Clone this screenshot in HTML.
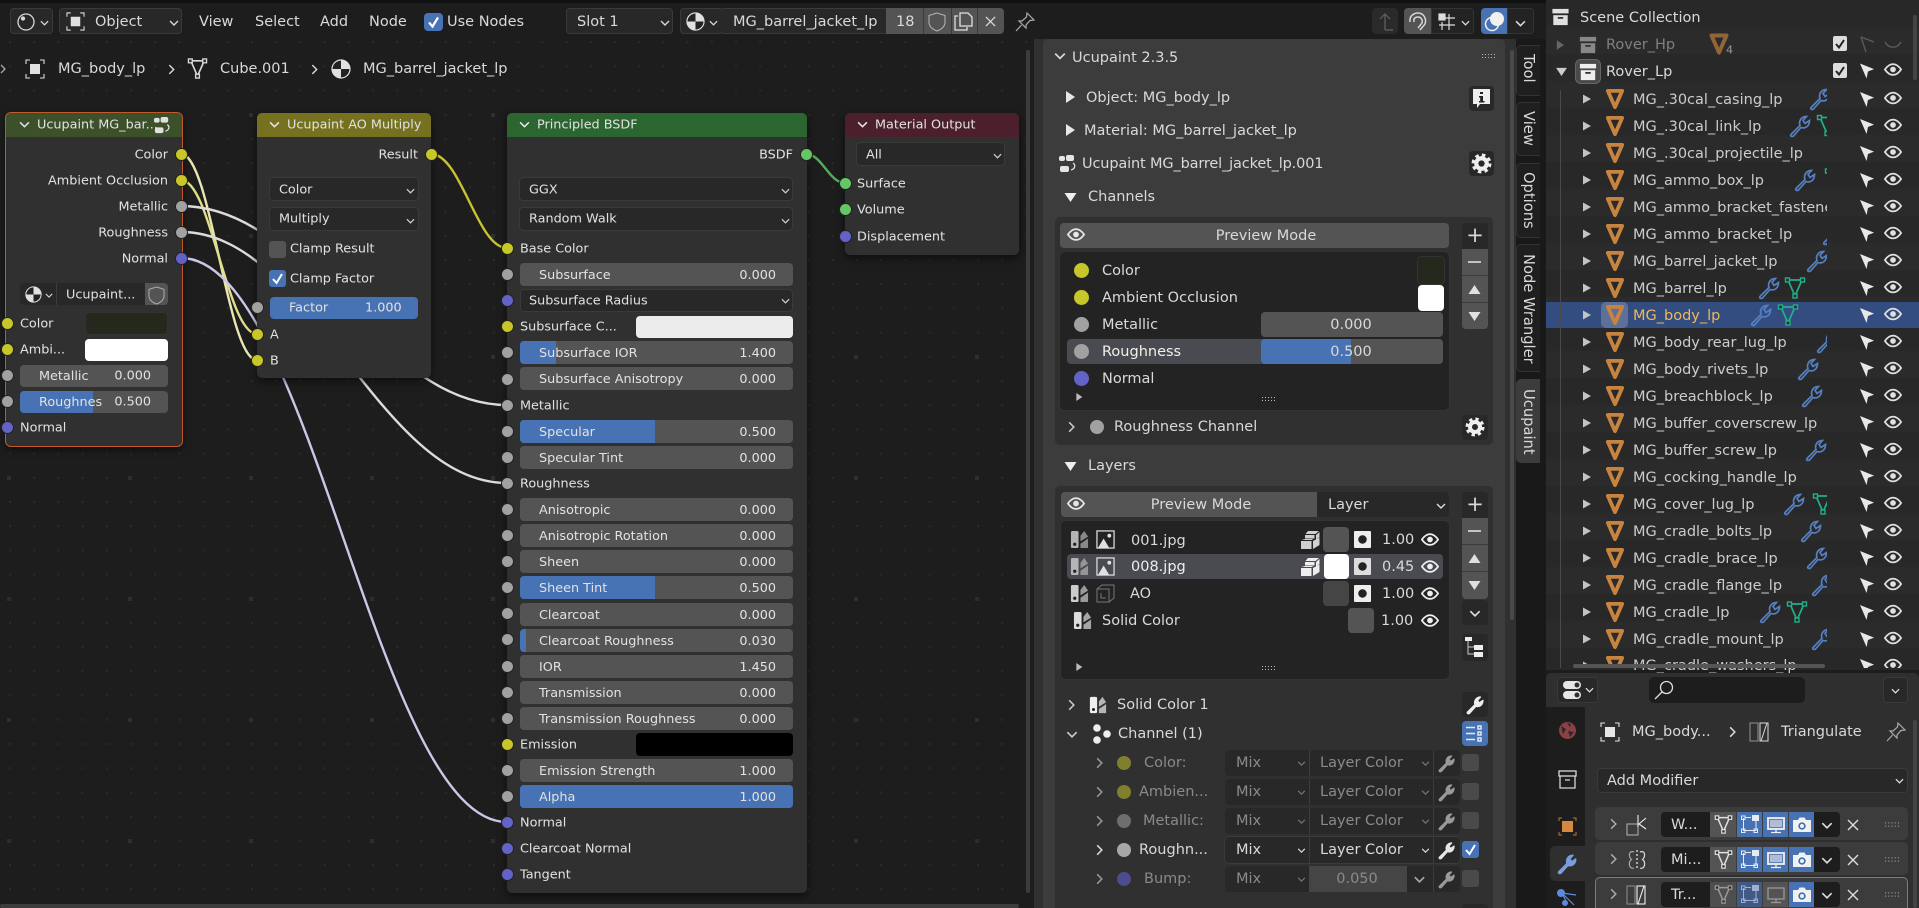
<!DOCTYPE html>
<html><head><meta charset="utf-8"><style>
html,body{margin:0;padding:0;background:#1d1d1d}
#a{position:relative;width:1919px;height:908px;overflow:hidden;font-family:"DejaVu Sans","Liberation Sans",sans-serif;font-size:14.5px;color:#d9d9d9;background:#1d1d1d}
i{position:absolute;display:block;font-style:normal}
b{position:absolute;font-weight:400;white-space:nowrap;transform:translateY(calc(-50% + 1px))}
b.r{transform:translate(-100%,calc(-50% + 1px))}
b.c{transform:translate(-50%,calc(-50% + 1px))}
b.n{font-size:12.8px;color:#e2e2e2}
b.d{color:#8a8a8a}
svg{position:absolute;overflow:visible}
.node{background:#303030;border-radius:5px;box-shadow:0 3px 9px rgba(0,0,0,.55)}
.hd{border-radius:5px 5px 0 0;height:24px;left:0;right:0;top:0}
.s{width:11px;height:11px;border-radius:50%;box-shadow:0 0 0 1px #222;margin:-5.5px 0 0 -5.5px;z-index:5}
.y{background:#c7c729}.g{background:#a1a1a1}.bl{background:#6363c7}.gr{background:#63c763}
.sl{height:23px;left:520px;width:273px;background:#545454;border-radius:4px;overflow:hidden;font-size:12.8px;line-height:25px;color:#e2e2e2}
.sl i{left:0;top:0;bottom:0;background:#4772b3}
.sl span{position:absolute;left:19px;white-space:nowrap}
.sl em{position:absolute;right:17px;font-style:normal}
.dd{background:#282828;border:1px solid #3a3a3a;border-radius:4px;box-sizing:border-box}
.nd{background:#282828;border-radius:4px}
.tab{left:1516px;width:24px;background:#1f1f1f;border:1px solid #333;border-right:0;border-radius:5px 0 0 5px;box-sizing:border-box}
.v{position:absolute;writing-mode:vertical-rl;white-space:nowrap;left:1519px;font-size:14.7px;line-height:18px}
.bt{background:#282828;border-radius:4px}
</style></head><body><div id="a">
<svg width="0" height="0" style="position:absolute"><defs>
<symbol id="eye" viewBox="0 0 20 14"><path d="M1 7C4 2.600 7 1 10 1s6 1.600 9 6c-3 4.400-6 6-9 6S4 11.400 1 7z" fill="none" stroke="currentColor" stroke-width="2"/><circle cx="10" cy="7" r="3.200" fill="currentColor"/></symbol>
<symbol id="arw" viewBox="0 0 16 16"><polygon points="0,0 15,6 8.500,8.500 7,16" fill="currentColor"/></symbol>
<symbol id="ob" viewBox="0 0 20 22"><path d="M2.500 2.500H17.500L10 19.500Z" fill="none" stroke="#c8843e" stroke-width="4" stroke-linejoin="round"/></symbol>
<symbol id="wr" viewBox="0 0 24 24"><path d="M3 20.500L12 11.500C10.500 7.500 13 2.500 18.500 2.500L15 6.500 17 9.500 21.500 6.500C21.500 12 17.500 15 13 13.500L5.500 22C4 23 1.800 22 3 20.500Z" fill="none" stroke="currentColor" stroke-width="1.700"/></symbol>
<symbol id="wf" viewBox="0 0 24 24"><path d="M3 20.500L12 11.500C10.500 7.500 13 2.500 18.500 2.500L15 6.500 17 9.500 21.500 6.500C21.500 12 17.500 15 13 13.500L5.500 22C4 23 1.800 22 3 20.500Z" fill="currentColor" stroke="currentColor" stroke-width="1.600" stroke-linejoin="round"/></symbol>
<symbol id="ms" viewBox="0 0 22 22"><path d="M4 3H18L11 19Z" fill="none" stroke="currentColor" stroke-width="1.700"/><rect x="1.500" y="1" width="4" height="4" fill="#282828" stroke="currentColor" stroke-width="1.400"/><rect x="16.500" y="1" width="4" height="4" fill="#282828" stroke="currentColor" stroke-width="1.400"/><rect x="9" y="17" width="4" height="4" fill="#282828" stroke="currentColor" stroke-width="1.400"/></symbol>
<symbol id="cd" viewBox="0 0 10 6"><path d="M1 1L5 5 9 1" fill="none" stroke="currentColor" stroke-width="1.400"/></symbol>
<symbol id="cr" viewBox="0 0 6 10"><path d="M1 1L5 5 1 9" fill="none" stroke="currentColor" stroke-width="1.300"/></symbol>
<symbol id="tr" viewBox="0 0 10 12"><polygon points="1,0 10,6 1,12" fill="currentColor"/></symbol>
<symbol id="td" viewBox="0 0 12 10"><polygon points="0,1 12,1 6,10" fill="currentColor"/></symbol>
<symbol id="tu" viewBox="0 0 12 10"><polygon points="0,9 12,9 6,0" fill="currentColor"/></symbol>
<symbol id="gr" viewBox="0 0 20 20"><circle cx="10" cy="10" r="5" fill="none" stroke="currentColor" stroke-width="4"/><circle cx="10" cy="10" r="8" fill="none" stroke="currentColor" stroke-width="3" stroke-dasharray="3.300 3"/></symbol>
<symbol id="co" viewBox="0 0 20 20"><rect x="1" y="1" width="18" height="5" fill="currentColor"/><path d="M2 8H18V19H2Z" fill="currentColor"/><rect x="7" y="10" width="6" height="2" fill="#333"/></symbol>
<symbol id="ot" viewBox="0 0 20 20"><rect x="5" y="5" width="10" height="10" fill="currentColor"/><path d="M1 5V1H5M15 1H19V5M19 15V19H15M5 19H1V15" fill="none" stroke="currentColor" stroke-width="1.100"/></symbol>
<symbol id="mt" viewBox="0 0 20 20"><circle cx="10" cy="10" r="9" fill="#222" stroke="currentColor" stroke-width="1.200"/><path d="M10 10V1A9 9 0 0 1 19 10ZM10 10V19A9 9 0 0 1 1 10Z" fill="currentColor"/></symbol>
<symbol id="sh" viewBox="0 0 18 20"><path d="M9 1L17 3.500V10C17 14.500 13 17.500 9 19 5 17.500 1 14.500 1 10V3.500Z" fill="none" stroke="currentColor" stroke-width="1.100"/></symbol>
<symbol id="pn" viewBox="0 0 20 20"><path d="M12 1L19 8 15 8.500 11 13 11 16 4 9 7 9 11.500 5ZM6.500 13L1 19" fill="none" stroke="currentColor" stroke-width="1.200"/></symbol>
<symbol id="xx" viewBox="0 0 12 12"><path d="M1 1L11 11M11 1L1 11" stroke="currentColor" stroke-width="1.400" fill="none"/></symbol>
<symbol id="up" viewBox="0 0 20 20"><rect x="1" y="2" width="6" height="5" rx="2" fill="currentColor"/><rect x="8" y="1" width="8" height="6" rx="2" fill="currentColor"/><rect x="2" y="12" width="9" height="6" rx="2" fill="currentColor"/><path d="M15 9C18 11 17 15 13 16" fill="none" stroke="currentColor" stroke-width="1.300"/></symbol>
<symbol id="bl" viewBox="0 0 20 20"><rect x="1" y="1" width="8" height="18" rx="1.500" fill="currentColor"/><circle cx="5" cy="15" r="1.700" fill="#222"/><path d="M11 6L15 1 19 7 11 12ZM11 14.500L19 9V19H11Z" fill="currentColor" opacity=".7"/></symbol>
<symbol id="im" viewBox="0 0 20 20"><rect x="1" y="1" width="18" height="18" fill="none" stroke="currentColor" stroke-width="1.300"/><path d="M2 19L8 9 14 19Z" fill="currentColor"/><circle cx="14" cy="6" r="2" fill="currentColor"/></symbol>
<symbol id="st" viewBox="0 0 20 20"><path d="M8 1H19L15.500 4H5.500ZM5 5H14.500V8.500H5ZM16 5L19.500 2V7L16 9.500ZM1 11H11.500V19H1ZM1.500 10L5 9H12L13 10ZM13 11L19.500 7.500V15L13 19Z" fill="currentColor"/></symbol>
<symbol id="mk" viewBox="0 0 18 18"><rect width="18" height="18" rx="1" fill="currentColor"/><circle cx="9" cy="9" r="4.500" fill="#222"/></symbol>
<symbol id="gp" viewBox="0 0 14 6"><path d="M1 1h1v1H1zM4 1h1v1H4zM7 1h1v1H7zM10 1h1v1h-1zM13 1h1v1h-1zM1 4h1v1H1zM4 4h1v1H4zM7 4h1v1H7zM10 4h1v1h-1zM13 4h1v1h-1z" fill="currentColor"/></symbol>
<symbol id="mon" viewBox="0 0 20 20"><rect x="2" y="3" width="16" height="11" fill="#5f7fb5" stroke="currentColor" stroke-width="1.800"/><path d="M4 5H16V12H4Z" fill="currentColor" opacity=".55"/><path d="M10 14V17M5 17.500H15" stroke="currentColor" stroke-width="1.300"/></symbol>
<symbol id="cam" viewBox="0 0 20 20"><path d="M1 5H6L7.500 2.500H12.500L14 5H19V17H1Z" fill="currentColor"/><circle cx="10" cy="11" r="4.200" fill="#4772b3" stroke="#fff" stroke-width=".8"/><circle cx="10" cy="11" r="2" fill="currentColor"/></symbol>
<symbol id="edm" viewBox="0 0 20 20"><path d="M3.500 4V16.500H16V6M5.500 3.500H11" fill="none" stroke="currentColor" stroke-width="1"/><rect x="1.500" y="2" width="3.500" height="3.500" fill="none" stroke="currentColor"/><rect x="12" y="1" width="7" height="6" fill="currentColor"/><rect x="1.500" y="15" width="3.500" height="3.500" fill="none" stroke="currentColor"/><rect x="14" y="15" width="3.500" height="3.500" fill="none" stroke="currentColor"/></symbol>
<pattern id="pt" x="0" y="85.500" width="373" height="27" patternUnits="userSpaceOnUse">
<polygon points="37,9 37,18 45,13.500" fill="#c4c4c4"/>
<use href="#ob" x="59" y="3" width="20" height="21"/>
<use href="#arw" x="314" y="6" width="15" height="16" color="#e8e8e8"/>
<use href="#eye" x="338" y="6" width="18" height="13" color="#e0e0e0"/>
</pattern>
</defs></svg>

<!-- node editor bg -->
<svg style="left:0;top:0" width="1034" height="908"><defs>
<pattern id="g1" x="9" y="17" width="24.200" height="24.200" patternUnits="userSpaceOnUse"><rect width="2" height="2" fill="#2a2a2a"/></pattern>
<pattern id="g2" x="7" y="113" width="121" height="121" patternUnits="userSpaceOnUse"><rect width="4" height="4" fill="#2e2e2e"/></pattern>
</defs><rect y="36" width="1034" height="872" fill="url(#g1)"/><rect y="36" width="1034" height="872" fill="url(#g2)"/></svg>
<i style="left:0;top:0;width:1919px;height:3px;background:#111"></i>

<!-- links -->
<svg style="left:0;top:0" width="1034" height="908" fill="none" stroke-linecap="round">
<path d="M181 154C211 154 227 360 257 360" stroke="#e9e7b0" stroke-width="2.400"/>
<path d="M181 180C211 180 227 334 257 334" stroke="#e0dd8c" stroke-width="2.400"/>
<path d="M181 206C311 206 377 405 507 405" stroke="#dcdcdc" stroke-width="2.400"/>
<path d="M181 232C311 232 377 483 507 483" stroke="#dcdcdc" stroke-width="2.400"/>
<path d="M181 258C311 258 377 822 507 822" stroke="#c9c8e6" stroke-width="2.400"/>
<path d="M431 154C461 154 477 248 507 248" stroke="#c7c230" stroke-width="2.400"/>
<path d="M806 154C822 154 829 183 845 183" stroke="#55ab5c" stroke-width="2.400"/>
</svg>

<!-- Header -->
<i class="dd" style="left:10px;top:8px;width:43px;height:26px"></i>
<svg style="left:17px;top:13px" width="18" height="18" fill="none" stroke="#d9d9d9" stroke-width="1.300"><circle cx="9" cy="9" r="8"/><circle cx="6" cy="5.500" r="1.500" fill="#d9d9d9"/></svg>
<svg style="left:40px;top:20px;color:#d9d9d9" width="9" height="6"><use href="#cd"/></svg>
<i class="dd" style="left:59px;top:8px;width:123px;height:26px"></i>
<svg style="left:66px;top:12px;color:#e0e0e0" width="19" height="19"><use href="#ot"/></svg>
<b style="left:95px;top:21px">Object</b>
<svg style="left:169px;top:20px;color:#d9d9d9" width="10" height="6"><use href="#cd"/></svg>
<b style="left:199px;top:21px">View</b><b style="left:255px;top:21px">Select</b><b style="left:320px;top:21px">Add</b><b style="left:369px;top:21px">Node</b>
<i style="left:424px;top:13px;width:19px;height:18px;background:#4772b3;border-radius:4px"></i>
<svg style="left:424px;top:13px" width="19" height="18" fill="none" stroke="#fff" stroke-width="2.200"><path d="M5 9.500L8.500 13.500 14 4.500"/></svg>
<b style="left:447px;top:21px">Use Nodes</b>
<i class="dd" style="left:566px;top:8px;width:107px;height:26px"></i>
<b style="left:577px;top:21px">Slot 1</b>
<svg style="left:660px;top:20px;color:#d9d9d9" width="10" height="6"><use href="#cd"/></svg>
<i class="dd" style="left:680px;top:8px;width:43px;height:26px"></i>
<svg style="left:686px;top:12px;color:#e0e0e0" width="19" height="19"><use href="#mt"/></svg>
<svg style="left:709px;top:20px;color:#d9d9d9" width="9" height="6"><use href="#cd"/></svg>
<i style="left:722px;top:8px;width:164px;height:26px;background:#282828;box-shadow:inset 0 1px 0 #3a3a3a,inset 0 -1px 0 #3a3a3a"></i>
<b style="left:733px;top:21px">MG_barrel_jacket_lp</b>
<i style="left:886px;top:8px;width:118px;height:26px;background:#545454;border-radius:0 4px 4px 0"></i>
<b style="left:896px;top:21px">18</b>
<svg style="left:928px;top:12px;color:#b0b0b0" width="18" height="20"><use href="#sh"/></svg>
<i style="left:923px;top:8px;width:1px;height:26px;background:#3a3a3a"></i><i style="left:951px;top:8px;width:1px;height:26px;background:#3a3a3a"></i><i style="left:977px;top:8px;width:1px;height:26px;background:#3a3a3a"></i>
<svg style="left:954px;top:12px" width="20" height="20" fill="none" stroke="#e0e0e0" stroke-width="1.300"><path d="M4 4H1V18H13V15M6 1H14L18 5V14H6Z"/></svg>
<svg style="left:985px;top:16px;color:#d9d9d9" width="11" height="11"><use href="#xx"/></svg>
<svg style="left:1015px;top:12px;color:#aaa" width="20" height="20"><use href="#pn"/></svg>

<svg style="left:0;top:64px;color:#aaa" width="6" height="10"><use href="#cr"/></svg>
<svg style="left:25px;top:59px;color:#e0e0e0" width="20" height="20"><use href="#ot"/></svg>
<b style="left:58px;top:68px">MG_body_lp</b>
<svg style="left:168px;top:64px;color:#d9d9d9" width="7" height="11"><use href="#cr"/></svg>
<svg style="left:187px;top:58px;color:#d9d9d9" width="21" height="21"><use href="#ms"/></svg>
<b style="left:220px;top:68px">Cube.001</b>
<svg style="left:311px;top:64px;color:#d9d9d9" width="7" height="11"><use href="#cr"/></svg>
<svg style="left:331px;top:59px;color:#e0e0e0" width="20" height="20"><use href="#mt"/></svg>
<b style="left:363px;top:68px">MG_barrel_jacket_lp</b>

<!-- Node 1 -->
<i class="node" style="left:6px;top:113px;width:176px;height:333px;box-shadow:0 0 0 1px #c2592a,0 3px 9px rgba(0,0,0,.55)"><i class="hd" style="background:#3c5029"></i></i>
<svg style="left:19px;top:121px;color:#e0e0e0" width="11" height="7"><use href="#cd"/></svg>
<b class="n" style="left:37px;top:124px">Ucupaint MG_bar...</b>
<svg style="left:153px;top:116px;color:#e0e0e0" width="19" height="19"><use href="#up"/></svg>
<b class="n r" style="left:168px;top:154px">Color</b><b class="n r" style="left:168px;top:180px">Ambient Occlusion</b><b class="n r" style="left:168px;top:206px">Metallic</b><b class="n r" style="left:168px;top:232px">Roughness</b><b class="n r" style="left:168px;top:258px">Normal</b>
<i class="s y" style="left:181px;top:154px"></i><i class="s y" style="left:181px;top:180px"></i><i class="s g" style="left:181px;top:206px"></i><i class="s g" style="left:181px;top:232px"></i><i class="s bl" style="left:181px;top:258px"></i>
<i style="left:20px;top:283px;width:125px;height:22px;background:#282828;border-radius:4px 0 0 4px"></i>
<i style="left:145px;top:283px;width:23px;height:22px;background:#545454;border-radius:0 4px 4px 0"></i>
<svg style="left:25px;top:286px;color:#e0e0e0" width="17" height="17"><use href="#mt"/></svg>
<svg style="left:45px;top:293px;color:#d9d9d9" width="8" height="5"><use href="#cd"/></svg>
<i style="left:56px;top:283px;width:1px;height:22px;background:#3c3c3c"></i>
<b class="n" style="left:66px;top:294px">Ucupaint...</b>
<svg style="left:148px;top:286px;color:#aaa" width="17" height="19"><use href="#sh"/></svg>
<b class="n" style="left:20px;top:323px">Color</b><i style="left:85px;top:312px;width:83px;height:23px;background:#25281d;border:1px solid #333;box-sizing:border-box;border-radius:4px"></i>
<b class="n" style="left:20px;top:349px">Ambi...</b><i style="left:85px;top:339px;width:83px;height:22px;background:#fff;border-radius:4px"></i>
<i class="sl" style="left:20px;top:365px;width:148px;height:22px;line-height:24px"><span>Metallic</span></i>
<b class="n r" style="left:151px;top:375px">0.000</b>
<i class="sl" style="left:20px;top:391px;width:148px;height:22px;line-height:24px"><i style="width:73px"></i><span>Roughnes</span></i>
<b class="n r" style="left:151px;top:401px">0.500</b>
<b class="n" style="left:20px;top:427px">Normal</b>
<i class="s y" style="left:7px;top:323px"></i><i class="s y" style="left:7px;top:349px"></i><i class="s g" style="left:7px;top:375px"></i><i class="s g" style="left:7px;top:401px"></i><i class="s bl" style="left:7px;top:427px"></i>

<!-- Node 2 -->
<i class="node" style="left:257px;top:113px;width:174px;height:265px"><i class="hd" style="background:#75711f"></i></i>
<svg style="left:269px;top:121px;color:#e6e6e6" width="11" height="7"><use href="#cd"/></svg>
<b class="n" style="left:287px;top:124px">Ucupaint AO Multiply</b>
<b class="n r" style="left:418px;top:154px">Result</b><i class="s y" style="left:431px;top:154px"></i>
<i class="dd" style="left:269px;top:177px;width:150px;height:24px"></i><b class="n" style="left:279px;top:189px">Color</b><svg style="left:406px;top:188px;color:#ccc" width="9" height="6"><use href="#cd"/></svg>
<i class="dd" style="left:269px;top:207px;width:150px;height:24px"></i><b class="n" style="left:279px;top:218px">Multiply</b><svg style="left:406px;top:218px;color:#ccc" width="9" height="6"><use href="#cd"/></svg>
<i style="left:269px;top:241px;width:17px;height:17px;background:#545454;border-radius:3px"></i><b class="n" style="left:290px;top:248px">Clamp Result</b>
<i style="left:269px;top:270px;width:17px;height:17px;background:#4772b3;border-radius:3px"></i>
<svg style="left:269px;top:270px" width="17" height="17" fill="none" stroke="#fff" stroke-width="2"><path d="M4 9L7.500 13 13 4"/></svg>
<b class="n" style="left:290px;top:278px">Clamp Factor</b>
<i style="left:270px;top:297px;width:148px;height:22px;background:#4772b3;border-radius:4px"></i>
<b class="n" style="left:289px;top:307px">Factor</b><b class="n" style="left:365px;top:307px">1.000</b>
<i class="s g" style="left:257px;top:307px"></i>
<i class="s y" style="left:257px;top:334px"></i><b class="n" style="left:270px;top:334px">A</b>
<i class="s y" style="left:257px;top:360px"></i><b class="n" style="left:270px;top:360px">B</b>

<!-- Node 3 -->
<i class="node" style="left:507px;top:113px;width:300px;height:780px"><i class="hd" style="background:#2b652f"></i></i>
<svg style="left:519px;top:121px;color:#e6e6e6" width="11" height="7"><use href="#cd"/></svg>
<b class="n" style="left:537px;top:124px">Principled BSDF</b>
<b class="n r" style="left:793px;top:154px">BSDF</b><i class="s gr" style="left:806px;top:154px"></i>
<i class="dd" style="left:519px;top:177px;width:274px;height:24px"></i><b class="n" style="left:529px;top:189px">GGX</b><svg style="left:781px;top:188px;color:#ccc" width="9" height="6"><use href="#cd"/></svg>
<i class="dd" style="left:519px;top:207px;width:274px;height:24px"></i><b class="n" style="left:529px;top:218px">Random Walk</b><svg style="left:781px;top:218px;color:#ccc" width="9" height="6"><use href="#cd"/></svg>
<i class="s y" style="left:507px;top:248px"></i><b class="n" style="left:520px;top:248px">Base Color</b>
<i class="s g" style="left:507px;top:274px"></i><i class="sl" style="top:263px"><span>Subsurface</span><em>0.000</em></i>
<i class="s bl" style="left:507px;top:300px"></i><i class="dd" style="left:520px;top:289px;width:273px;height:23px"></i><b class="n" style="left:529px;top:300px">Subsurface Radius</b><svg style="left:781px;top:298px;color:#ccc" width="9" height="6"><use href="#cd"/></svg>
<i class="s y" style="left:507px;top:326px"></i><b class="n" style="left:520px;top:326px">Subsurface C...</b><i style="left:636px;top:316px;width:157px;height:22px;background:#ececec;border-radius:4px"></i>
<i class="s g" style="left:507px;top:352px"></i><i class="sl" style="top:341px"><i style="width:36px"></i><span>Subsurface IOR</span><em>1.400</em></i>
<i class="s g" style="left:507px;top:379px"></i><i class="sl" style="top:367px"><span>Subsurface Anisotropy</span><em>0.000</em></i>
<i class="s g" style="left:507px;top:405px"></i><b class="n" style="left:520px;top:405px">Metallic</b>
<i class="s g" style="left:507px;top:431px"></i><i class="sl" style="top:420px"><i style="width:135px"></i><span>Specular</span><em>0.500</em></i>
<i class="s g" style="left:507px;top:457px"></i><i class="sl" style="top:446px"><span>Specular Tint</span><em>0.000</em></i>
<i class="s g" style="left:507px;top:483px"></i><b class="n" style="left:520px;top:483px">Roughness</b>
<i class="s g" style="left:507px;top:509px"></i><i class="sl" style="top:498px"><span>Anisotropic</span><em>0.000</em></i>
<i class="s g" style="left:507px;top:535px"></i><i class="sl" style="top:524px"><span>Anisotropic Rotation</span><em>0.000</em></i>
<i class="s g" style="left:507px;top:561px"></i><i class="sl" style="top:550px"><span>Sheen</span><em>0.000</em></i>
<i class="s g" style="left:507px;top:587px"></i><i class="sl" style="top:576px"><i style="width:135px"></i><span>Sheen Tint</span><em>0.500</em></i>
<i class="s g" style="left:507px;top:613px"></i><i class="sl" style="top:603px"><span>Clearcoat</span><em>0.000</em></i>
<i class="s g" style="left:507px;top:639px"></i><i class="sl" style="top:629px"><i style="width:6px"></i><span>Clearcoat Roughness</span><em>0.030</em></i>
<i class="s g" style="left:507px;top:666px"></i><i class="sl" style="top:655px"><span>IOR</span><em>1.450</em></i>
<i class="s g" style="left:507px;top:692px"></i><i class="sl" style="top:681px"><span>Transmission</span><em>0.000</em></i>
<i class="s g" style="left:507px;top:718px"></i><i class="sl" style="top:707px"><span>Transmission Roughness</span><em>0.000</em></i>
<i class="s y" style="left:507px;top:744px"></i><b class="n" style="left:520px;top:744px">Emission</b><i style="left:636px;top:733px;width:157px;height:23px;background:#000;border-radius:4px"></i>
<i class="s g" style="left:507px;top:770px"></i><i class="sl" style="top:759px"><span>Emission Strength</span><em>1.000</em></i>
<i class="s g" style="left:507px;top:796px"></i><i class="sl" style="top:785px"><i style="width:273px"></i><span>Alpha</span><em>1.000</em></i>
<i class="s bl" style="left:507px;top:822px"></i><b class="n" style="left:520px;top:822px">Normal</b>
<i class="s bl" style="left:507px;top:848px"></i><b class="n" style="left:520px;top:848px">Clearcoat Normal</b>
<i class="s bl" style="left:507px;top:874px"></i><b class="n" style="left:520px;top:874px">Tangent</b>

<!-- Material output -->
<i class="node" style="left:845px;top:113px;width:174px;height:142px"><i class="hd" style="background:#4b1f2b"></i></i>
<svg style="left:857px;top:121px;color:#e6e6e6" width="11" height="7"><use href="#cd"/></svg>
<b class="n" style="left:875px;top:124px">Material Output</b>
<i class="dd" style="left:856px;top:142px;width:149px;height:24px"></i><b class="n" style="left:866px;top:154px">All</b><svg style="left:993px;top:153px;color:#ccc" width="9" height="6"><use href="#cd"/></svg>
<i class="s gr" style="left:845px;top:183px"></i><b class="n" style="left:857px;top:183px">Surface</b>
<i class="s gr" style="left:845px;top:209px"></i><b class="n" style="left:857px;top:209px">Volume</b>
<i class="s bl" style="left:845px;top:236px"></i><b class="n" style="left:857px;top:236px">Displacement</b>

<!-- scrollbars node editor -->
<i style="left:1026px;top:50px;width:4px;height:843px;background:#3c3c3c;border-radius:2px"></i>
<i style="left:0;top:904px;width:1019px;height:4px;background:#3c3c3c;border-radius:2px"></i>

<!-- Sidebar -->
<i style="left:1034px;top:39px;width:482px;height:869px;background:#303030"></i>
<i style="left:1043px;top:39px;width:462px;height:869px;background:#3c3c3c;border-radius:5px 5px 0 0"></i>
<i style="left:1510px;top:50px;width:4px;height:570px;background:#4a4a4a;border-radius:2px"></i>

<i style="left:1516px;top:39px;width:30px;height:869px;background:#191919"></i>
<i class="tab" style="top:45px;height:51px"></i><i class="tab" style="top:102px;height:54px"></i><i class="tab" style="top:163px;height:75px"></i><i class="tab" style="top:244px;height:128px"></i>
<i class="tab" style="top:379px;height:84px;background:#3c3c3c;border-color:#3c3c3c"></i>
<span class="v" style="top:54px">Tool</span><span class="v" style="top:111px">View</span><span class="v" style="top:172px">Options</span><span class="v" style="top:254px">Node Wrangler</span><span class="v" style="top:389px">Ucupaint</span>

<svg style="left:1054px;top:52px;color:#d9d9d9" width="12" height="8"><use href="#cd"/></svg>
<b style="left:1072px;top:57px">Ucupaint 2.3.5</b>
<svg style="left:1481px;top:53px;color:#bbb" width="14" height="6"><use href="#gp"/></svg>
<svg style="left:1065px;top:91px;color:#e6e6e6" width="10" height="12"><use href="#tr"/></svg><b style="left:1086px;top:97px">Object: MG_body_lp</b>
<i class="bt" style="left:1469px;top:86px;width:25px;height:25px"></i>
<svg style="left:1471px;top:88px" width="21" height="21"><path d="M2 1H19V16H9L6 20V16H2Z" fill="#eee"/><path d="M9 4h3v2H9zM8 8h4v5h1.500v1.500h-5.500V13h1.200V9.500H8z" fill="#222"/></svg>
<svg style="left:1065px;top:124px;color:#e6e6e6" width="10" height="12"><use href="#tr"/></svg><b style="left:1084px;top:130px">Material: MG_barrel_jacket_lp</b>
<svg style="left:1058px;top:154px;color:#e6e6e6" width="20" height="20"><use href="#up"/></svg>
<b style="left:1082px;top:163px;letter-spacing:-.15px">Ucupaint MG_barrel_jacket_lp.001</b>
<i class="bt" style="left:1469px;top:151px;width:25px;height:25px"></i><svg style="left:1471px;top:153px;color:#eee" width="21" height="21"><use href="#gr"/></svg>
<svg style="left:1064px;top:192px;color:#eee" width="13" height="10"><use href="#td"/></svg><b style="left:1088px;top:196px">Channels</b>

<!-- Channels -->
<i style="left:1055px;top:217px;width:438px;height:228px;background:#303030;border-radius:5px"></i>
<i style="left:1060px;top:223px;width:389px;height:25px;background:#545454;border-radius:4px"></i>
<svg style="left:1067px;top:228px;color:#e6e6e6" width="18" height="13"><use href="#eye"/></svg>
<b class="c" style="left:1266px;top:235px">Preview Mode</b>
<i class="bt" style="left:1462px;top:223px;width:26px;height:26px;border-radius:4px 4px 0 0"></i><b class="c" style="left:1475px;top:234px;font-size:21px">+</b>
<i style="left:1462px;top:249px;width:26px;height:80px;background:#545454;border-radius:0 0 4px 4px"></i>
<i style="left:1468px;top:261px;width:13px;height:1.500px;background:#c4c4c4"></i>
<svg style="left:1468px;top:285px;color:#e0e0e0" width="13" height="10"><use href="#tu"/></svg>
<svg style="left:1468px;top:311px;color:#e0e0e0" width="13" height="10"><use href="#td"/></svg>
<i style="left:1462px;top:275px;width:26px;height:1px;background:#3c3c3c"></i><i style="left:1462px;top:302px;width:26px;height:1px;background:#3c3c3c"></i>
<i style="left:1060px;top:252px;width:389px;height:158px;background:#232323;border-radius:5px;box-shadow:0 0 0 1px #333"></i>
<i style="left:1074px;top:263px;width:15px;height:15px;border-radius:50%;background:#c7c729"></i><b style="left:1102px;top:270px">Color</b>
<i style="left:1418px;top:257px;width:26px;height:27px;background:#25281d;border-radius:4px;box-shadow:0 0 0 1px #333"></i>
<i style="left:1074px;top:290px;width:15px;height:15px;border-radius:50%;background:#c7c729"></i><b style="left:1102px;top:297px">Ambient Occlusion</b>
<i style="left:1418px;top:285px;width:26px;height:26px;background:#fff;border-radius:4px"></i>
<i style="left:1074px;top:317px;width:15px;height:15px;border-radius:50%;background:#a1a1a1"></i><b style="left:1102px;top:324px">Metallic</b>
<i style="left:1261px;top:312px;width:182px;height:25px;background:#545454;border-radius:4px"></i><b class="c" style="left:1351px;top:324px">0.000</b>
<i style="left:1067px;top:339px;width:376px;height:25px;background:#4a4b50;border-radius:4px"></i>
<i style="left:1074px;top:344px;width:15px;height:15px;border-radius:50%;background:#a1a1a1"></i><b style="left:1102px;top:351px;color:#f0f0f0">Roughness</b>
<i style="left:1261px;top:339px;width:182px;height:25px;background:#545454;border-radius:4px;overflow:hidden"><i style="left:0;top:0;width:90px;height:25px;background:#4772b3"></i></i><b class="c" style="left:1351px;top:351px">0.500</b>
<i style="left:1074px;top:371px;width:15px;height:15px;border-radius:50%;background:#6363c7"></i><b style="left:1102px;top:378px">Normal</b>
<svg style="left:1075px;top:393px;color:#bbb" width="8" height="8"><use href="#tr"/></svg>
<svg style="left:1261px;top:396px;color:#bbb" width="14" height="6"><use href="#gp"/></svg>
<svg style="left:1068px;top:421px;color:#ccc" width="7" height="12"><use href="#cr"/></svg>
<i style="left:1090px;top:420px;width:14px;height:14px;border-radius:50%;background:#a1a1a1"></i>
<b style="left:1114px;top:426px">Roughness Channel</b>
<i class="bt" style="left:1462px;top:415px;width:26px;height:25px"></i><svg style="left:1465px;top:417px;color:#eee" width="20" height="20"><use href="#gr"/></svg>

<!-- Layers -->
<svg style="left:1064px;top:461px;color:#eee" width="13" height="10"><use href="#td"/></svg><b style="left:1088px;top:465px">Layers</b>
<i style="left:1055px;top:486px;width:438px;height:422px;background:#303030;border-radius:5px 5px 0 0"></i>
<i style="left:1061px;top:492px;width:256px;height:25px;background:#545454;border-radius:4px 0 0 4px"></i>
<i style="left:1317px;top:492px;width:132px;height:25px;background:#282828;border-radius:0 4px 4px 0"></i>
<svg style="left:1067px;top:497px;color:#e6e6e6" width="18" height="13"><use href="#eye"/></svg>
<b class="c" style="left:1201px;top:504px">Preview Mode</b><b style="left:1328px;top:504px">Layer</b>
<svg style="left:1436px;top:503px;color:#ddd" width="10" height="6"><use href="#cd"/></svg>
<i class="bt" style="left:1462px;top:492px;width:26px;height:26px;border-radius:4px 4px 0 0"></i><b class="c" style="left:1475px;top:503px;font-size:21px">+</b>
<i style="left:1462px;top:518px;width:26px;height:81px;background:#545454;border-radius:0 0 4px 4px"></i>
<i style="left:1468px;top:530px;width:13px;height:1.500px;background:#c4c4c4"></i>
<svg style="left:1468px;top:554px;color:#e0e0e0" width="13" height="10"><use href="#tu"/></svg>
<svg style="left:1468px;top:580px;color:#e0e0e0" width="13" height="10"><use href="#td"/></svg>
<i style="left:1462px;top:544px;width:26px;height:1px;background:#3c3c3c"></i><i style="left:1462px;top:571px;width:26px;height:1px;background:#3c3c3c"></i>
<i class="bt" style="left:1462px;top:600px;width:26px;height:25px"></i><svg style="left:1469px;top:610px;color:#e0e0e0" width="12" height="7"><use href="#cd"/></svg>
<i class="bt" style="left:1462px;top:634px;width:26px;height:27px"></i>
<svg style="left:1464px;top:636px" width="22" height="22"><rect x="1" y="1" width="7" height="4" fill="#eee"/><rect x="10" y="9" width="9" height="5" fill="#eee"/><rect x="10" y="16" width="9" height="5" fill="#eee"/><path d="M4 5V18H10M4 11H10" stroke="#ccc" fill="none"/></svg>

<i style="left:1061px;top:521px;width:388px;height:158px;background:#232323;border-radius:5px;box-shadow:0 0 0 1px #333"></i>
<i style="left:1067px;top:554px;width:376px;height:25px;background:#4a4b50;border-radius:4px"></i>
<svg style="left:1070px;top:530px;color:#b5b5b5" width="19" height="19"><use href="#bl"/></svg><svg style="left:1096px;top:530px;color:#e0e0e0" width="19" height="19"><use href="#im"/></svg>
<b style="left:1131px;top:540px">001.jpg</b>
<svg style="left:1300px;top:530px;color:#d0d0d0" width="20" height="20"><use href="#st"/></svg>
<i style="left:1323px;top:527px;width:26px;height:25px;background:#545454;border-radius:4px"></i>
<svg style="left:1354px;top:531px;color:#eee" width="17" height="17"><use href="#mk"/></svg><b style="left:1382px;top:539px">1.00</b>
<svg style="left:1421px;top:533px;color:#eee" width="18" height="13"><use href="#eye"/></svg>
<svg style="left:1070px;top:557px;color:#b5b5b5" width="19" height="19"><use href="#bl"/></svg><svg style="left:1096px;top:557px;color:#e0e0e0" width="19" height="19"><use href="#im"/></svg>
<b style="left:1131px;top:566px;color:#eee">008.jpg</b>
<svg style="left:1300px;top:557px;color:#eee" width="20" height="20"><use href="#st"/></svg>
<i style="left:1324px;top:554px;width:25px;height:25px;background:#fff;border-radius:4px"></i>
<svg style="left:1354px;top:558px;color:#ddd" width="17" height="17"><use href="#mk"/></svg><b style="left:1382px;top:566px">0.45</b>
<svg style="left:1421px;top:560px;color:#eee" width="18" height="13"><use href="#eye"/></svg>
<svg style="left:1070px;top:584px;color:#ccc" width="19" height="19"><use href="#bl"/></svg>
<svg style="left:1096px;top:584px" width="19" height="19" fill="none" stroke="#777"><path d="M1 5H13V18H1ZM1 5L6 1H18V14L13 18M5 9V14H10"/></svg>
<b style="left:1130px;top:593px">AO</b>
<i style="left:1323px;top:581px;width:26px;height:25px;background:#454545;border-radius:4px"></i>
<svg style="left:1354px;top:585px;color:#eee" width="17" height="17"><use href="#mk"/></svg><b style="left:1382px;top:593px">1.00</b>
<svg style="left:1421px;top:587px;color:#eee" width="18" height="13"><use href="#eye"/></svg>
<svg style="left:1073px;top:611px;color:#ddd" width="19" height="19"><use href="#bl"/></svg>
<b style="left:1102px;top:620px">Solid Color</b>
<i style="left:1348px;top:608px;width:26px;height:25px;background:#545454;border-radius:4px"></i>
<b style="left:1381px;top:620px">1.00</b>
<svg style="left:1421px;top:614px;color:#eee" width="18" height="13"><use href="#eye"/></svg>
<svg style="left:1075px;top:663px;color:#bbb" width="8" height="8"><use href="#tr"/></svg>
<svg style="left:1261px;top:665px;color:#bbb" width="14" height="6"><use href="#gp"/></svg>

<svg style="left:1068px;top:699px;color:#ccc" width="7" height="12"><use href="#cr"/></svg>
<svg style="left:1089px;top:696px;color:#eee" width="18" height="18"><use href="#bl"/></svg>
<b style="left:1117px;top:704px">Solid Color 1</b>
<i class="bt" style="left:1462px;top:692px;width:26px;height:25px"></i><svg style="left:1465px;top:695px;color:#eee" width="20" height="20"><use href="#wf"/></svg>
<svg style="left:1066px;top:731px;color:#ccc" width="12" height="7"><use href="#cd"/></svg>
<svg style="left:1091px;top:724px" width="20" height="20" fill="#eee"><circle cx="6" cy="4" r="3.800"/><circle cx="16" cy="10" r="3.800"/><circle cx="6" cy="16" r="3.800"/></svg>
<b style="left:1118px;top:733px">Channel (1)</b>
<i style="left:1462px;top:721px;width:26px;height:25px;background:#4772b3;border-radius:4px"></i>
<svg style="left:1465px;top:725px" width="20" height="17" fill="none" stroke="#e4e8f0" stroke-width="1.500"><path d="M1 2.500H10M1 8.500H10M1 14.500H10"/><rect x="13" y="1" width="3" height="3"/><rect x="13" y="7" width="3" height="3"/><rect x="13" y="13" width="3" height="3"/></svg>

<!-- Channel rows -->
<svg style="left:1096px;top:757px;color:#999" width="7" height="12"><use href="#cr"/></svg>
<i style="left:1117px;top:756px;width:14px;height:14px;border-radius:50%;background:#807f2e"></i><b class="d" style="left:1144px;top:762px">Color:</b>
<i class="nd" style="left:1225px;top:750px;width:235px;height:26px"></i><b class="d" style="left:1236px;top:762px">Mix</b><svg style="left:1297px;top:761px;color:#777" width="9" height="5"><use href="#cd"/></svg><i style="left:1309px;top:750px;width:1px;height:26px;background:#3c3c3c"></i><b class="d" style="left:1320px;top:762px">Layer Color</b><svg style="left:1421px;top:761px;color:#777" width="9" height="5"><use href="#cd"/></svg><i style="left:1433px;top:750px;width:1px;height:26px;background:#3c3c3c"></i><svg style="left:1437px;top:754px;color:#999" width="19" height="19"><use href="#wf"/></svg><i style="left:1462px;top:754px;width:17px;height:17px;background:#4a4a4a;border-radius:3px"></i>
<svg style="left:1096px;top:786px;color:#999" width="7" height="12"><use href="#cr"/></svg>
<i style="left:1117px;top:785px;width:14px;height:14px;border-radius:50%;background:#807f2e"></i><b class="d" style="left:1139px;top:791px">Ambien...</b>
<i class="nd" style="left:1225px;top:779px;width:235px;height:26px"></i><b class="d" style="left:1236px;top:791px">Mix</b><svg style="left:1297px;top:790px;color:#777" width="9" height="5"><use href="#cd"/></svg><i style="left:1309px;top:779px;width:1px;height:26px;background:#3c3c3c"></i><b class="d" style="left:1320px;top:791px">Layer Color</b><svg style="left:1421px;top:790px;color:#777" width="9" height="5"><use href="#cd"/></svg><i style="left:1433px;top:779px;width:1px;height:26px;background:#3c3c3c"></i><svg style="left:1437px;top:783px;color:#999" width="19" height="19"><use href="#wf"/></svg><i style="left:1462px;top:783px;width:17px;height:17px;background:#4a4a4a;border-radius:3px"></i>
<svg style="left:1096px;top:815px;color:#999" width="7" height="12"><use href="#cr"/></svg>
<i style="left:1117px;top:814px;width:14px;height:14px;border-radius:50%;background:#6e6e6e"></i><b class="d" style="left:1143px;top:820px">Metallic:</b>
<i class="nd" style="left:1225px;top:808px;width:235px;height:26px"></i><b class="d" style="left:1236px;top:820px">Mix</b><svg style="left:1297px;top:819px;color:#777" width="9" height="5"><use href="#cd"/></svg><i style="left:1309px;top:808px;width:1px;height:26px;background:#3c3c3c"></i><b class="d" style="left:1320px;top:820px">Layer Color</b><svg style="left:1421px;top:819px;color:#777" width="9" height="5"><use href="#cd"/></svg><i style="left:1433px;top:808px;width:1px;height:26px;background:#3c3c3c"></i><svg style="left:1437px;top:812px;color:#999" width="19" height="19"><use href="#wf"/></svg><i style="left:1462px;top:812px;width:17px;height:17px;background:#4a4a4a;border-radius:3px"></i>
<svg style="left:1096px;top:844px;color:#ddd" width="7" height="12"><use href="#cr"/></svg>
<i style="left:1117px;top:843px;width:14px;height:14px;border-radius:50%;background:#a8a8a8"></i><b style="left:1139px;top:849px">Roughn...</b>
<i class="nd" style="left:1225px;top:837px;width:235px;height:26px;box-shadow:0 0 0 1px #3a3a3a"></i><b style="left:1236px;top:849px">Mix</b><svg style="left:1297px;top:848px;color:#ddd" width="9" height="5"><use href="#cd"/></svg><i style="left:1309px;top:837px;width:1px;height:26px;background:#3c3c3c"></i><b style="left:1320px;top:849px">Layer Color</b><svg style="left:1421px;top:848px;color:#ddd" width="9" height="5"><use href="#cd"/></svg><i style="left:1433px;top:837px;width:1px;height:26px;background:#3c3c3c"></i><svg style="left:1437px;top:841px;color:#e6e6e6" width="19" height="19"><use href="#wf"/></svg><i style="left:1462px;top:841px;width:17px;height:17px;background:#4772b3;border-radius:3px"></i>
<svg style="left:1462px;top:841px" width="17" height="17" fill="none" stroke="#fff" stroke-width="2"><path d="M4 9L7.500 13 13 4"/></svg>
<svg style="left:1096px;top:873px;color:#999" width="7" height="12"><use href="#cr"/></svg>
<i style="left:1117px;top:872px;width:14px;height:14px;border-radius:50%;background:#4c4c8e"></i><b class="d" style="left:1144px;top:878px">Bump:</b>
<i class="nd" style="left:1225px;top:866px;width:235px;height:26px"></i><b class="d" style="left:1236px;top:878px">Mix</b><svg style="left:1297px;top:877px;color:#777" width="9" height="5"><use href="#cd"/></svg>
<i style="left:1309px;top:866px;width:98px;height:26px;background:#454545"></i><b class="c d" style="left:1357px;top:878px">0.050</b><svg style="left:1413px;top:876px;color:#aaa" width="13" height="7"><use href="#cd"/></svg><i style="left:1433px;top:866px;width:1px;height:26px;background:#3c3c3c"></i><svg style="left:1437px;top:870px;color:#999" width="19" height="19"><use href="#wf"/></svg><i style="left:1462px;top:870px;width:17px;height:17px;background:#4a4a4a;border-radius:3px"></i>
<i class="bt" style="left:1462px;top:904px;width:26px;height:4px;border-radius:4px 4px 0 0"></i>

<!-- Outliner -->
<i style="left:1546px;top:0;width:373px;height:670px;background:#282828;background-image:repeating-linear-gradient(#282828 0,#282828 27px,#2b2b2b 27px,#2b2b2b 54px)"></i>
<svg style="left:1551px;top:8px;color:#e0e0e0" width="19" height="18"><use href="#co"/></svg>
<b style="left:1580px;top:17px">Scene Collection</b>
<svg style="left:1556px;top:40px;color:#666" width="8" height="10"><use href="#tr"/></svg>
<svg style="left:1579px;top:36px;color:#888" width="18" height="18"><use href="#co"/></svg>
<b style="left:1606px;top:44px;color:#808080">Rover_Hp</b>
<svg style="left:1709px;top:33px;opacity:.65" width="20" height="22"><use href="#ob"/></svg><b style="left:1726px;top:49px;font-size:11px;color:#999">4</b>
<i style="left:1833px;top:36px;width:14px;height:15px;background:#ddd;border-radius:2px"></i><svg style="left:1833px;top:36px" width="14" height="15" fill="none" stroke="#222" stroke-width="2"><path d="M3 8L6 11.500 11 4"/></svg>
<svg style="left:1860px;top:36px" width="15" height="17"><path d="M1 1L14 6 M1 1L6 16" fill="none" stroke="#5c5c5c" stroke-width="1.300"/></svg>
<svg style="left:1884px;top:41px" width="18" height="8" fill="none" stroke="#5c5c5c" stroke-width="1.300"><path d="M1 1C5 8 13 8 17 1"/></svg>
<svg style="left:1556px;top:67px;color:#ccc" width="11" height="9"><use href="#td"/></svg>
<i style="left:1575px;top:59px;width:26px;height:25px;border-radius:6px;background:#4a4a4a;box-shadow:inset 0 0 0 1px #666"></i>
<svg style="left:1579px;top:63px;color:#eee" width="18" height="18"><use href="#co"/></svg>
<b style="left:1606px;top:71px">Rover_Lp</b>
<i style="left:1833px;top:63px;width:14px;height:15px;background:#ddd;border-radius:2px"></i><svg style="left:1833px;top:63px" width="14" height="15" fill="none" stroke="#222" stroke-width="2"><path d="M3 8L6 11.500 11 4"/></svg>
<svg style="left:1860px;top:63px;color:#e8e8e8" width="15" height="16"><use href="#arw"/></svg>
<svg style="left:1884px;top:63px;color:#e0e0e0" width="18" height="13"><use href="#eye"/></svg>
<i style="left:1546px;top:302px;width:373px;height:26px;background:#334d80"></i>
<i style="left:1601px;top:302px;width:27px;height:26px;background:#5d7099;border-radius:5px"></i>
<i style="left:1560px;top:90px;width:1px;height:578px;background:#4a4a4a"></i>
<svg style="left:1546px;top:0" width="373" height="668"><rect y="85.500" width="373" height="582.500" fill="url(#pt)"/></svg>
<svg style="left:1700px;top:0;color:#5680c2;overflow:hidden" width="127" height="668" viewBox="0 0 127 668">
<g color="#5680c2"><use href="#wr" x="108" y="87" width="24" height="24"/><use href="#wr" x="88" y="114" width="24" height="24"/><use href="#wr" x="93" y="168" width="24" height="24"/><use href="#wr" x="121" y="222" width="24" height="24"/><use href="#wr" x="105" y="249" width="24" height="24"/><use href="#wr" x="57" y="276" width="24" height="24"/><use href="#wr" x="49" y="303" width="24" height="24"/><use href="#wr" x="115" y="330" width="24" height="24"/><use href="#wr" x="96" y="357" width="24" height="24"/><use href="#wr" x="100" y="384" width="24" height="24"/><use href="#wr" x="104" y="438" width="24" height="24"/><use href="#wr" x="82" y="492" width="24" height="24"/><use href="#wr" x="99" y="519" width="24" height="24"/><use href="#wr" x="105" y="546" width="24" height="24"/><use href="#wr" x="110" y="573" width="24" height="24"/><use href="#wr" x="58" y="600" width="24" height="24"/><use href="#wr" x="110" y="627" width="24" height="24"/></g>
<g color="#22b08a"><use href="#ms" x="116" y="113" width="22" height="25"/><use href="#ms" x="124" y="167" width="22" height="24"/><use href="#ms" x="84" y="276" width="22" height="24"/><use href="#ms" x="77" y="303" width="22" height="24"/><use href="#ms" x="112" y="492" width="22" height="24"/><use href="#ms" x="86" y="600" width="22" height="24"/></g>
</svg>
<b style="left:1633px;top:99px;color:#ccc">MG_.30cal_casing_lp</b>
<b style="left:1633px;top:126px;color:#ccc">MG_.30cal_link_lp</b>
<b style="left:1633px;top:153px;color:#ccc">MG_.30cal_projectile_lp</b>
<b style="left:1633px;top:180px;color:#ccc">MG_ammo_box_lp</b>
<i style="left:1633px;top:197px;width:194px;height:21px;overflow:hidden"><b style="left:0;top:10px;color:#ccc">MG_ammo_bracket_fastener_lp</b></i>
<b style="left:1633px;top:234px;color:#ccc">MG_ammo_bracket_lp</b>
<b style="left:1633px;top:261px;color:#ccc">MG_barrel_jacket_lp</b>
<b style="left:1633px;top:288px;color:#ccc">MG_barrel_lp</b>
<b style="left:1633px;top:315px;color:#f0b858">MG_body_lp</b>
<b style="left:1633px;top:342px;color:#ccc">MG_body_rear_lug_lp</b>
<b style="left:1633px;top:369px;color:#ccc">MG_body_rivets_lp</b>
<b style="left:1633px;top:396px;color:#ccc">MG_breachblock_lp</b>
<b style="left:1633px;top:423px;color:#ccc">MG_buffer_coverscrew_lp</b>
<b style="left:1633px;top:450px;color:#ccc">MG_buffer_screw_lp</b>
<b style="left:1633px;top:477px;color:#ccc">MG_cocking_handle_lp</b>
<b style="left:1633px;top:504px;color:#ccc">MG_cover_lug_lp</b>
<b style="left:1633px;top:531px;color:#ccc">MG_cradle_bolts_lp</b>
<b style="left:1633px;top:558px;color:#ccc">MG_cradle_brace_lp</b>
<b style="left:1633px;top:585px;color:#ccc">MG_cradle_flange_lp</b>
<b style="left:1633px;top:612px;color:#ccc">MG_cradle_lp</b>
<b style="left:1633px;top:639px;color:#ccc">MG_cradle_mount_lp</b>
<b style="left:1633px;top:665px;color:#ccc">MG_cradle_washers_lp</b>
<i style="left:1573px;top:664px;width:252px;height:4px;background:#555;border-radius:2px"></i>
<i style="left:1913px;top:15px;width:4px;height:65px;background:#444;border-radius:2px"></i>

<!-- Properties -->
<i style="left:1546px;top:673px;width:373px;height:235px;background:#2f2f2f;border-radius:5px 5px 0 0"></i>
<i class="dd" style="left:1557px;top:677px;width:41px;height:26px"></i>
<svg style="left:1562px;top:680px" width="20" height="20"><rect x="1" y="1" width="18" height="8" rx="4" fill="#e6e6e6"/><rect x="1" y="11" width="18" height="8" rx="4" fill="#e6e6e6"/><circle cx="15" cy="5" r="2.500" fill="#2f2f2f"/><circle cx="15" cy="15" r="2.500" fill="#2f2f2f"/></svg>
<svg style="left:1585px;top:687px;color:#ddd" width="9" height="6"><use href="#cd"/></svg>
<i style="left:1649px;top:677px;width:156px;height:26px;background:#1d1d1d;border-radius:5px"></i>
<svg style="left:1654px;top:680px" width="20" height="20" fill="none" stroke="#ddd" stroke-width="1.300"><circle cx="12.500" cy="7.500" r="6"/><path d="M8 12L1 19"/></svg>
<i class="dd" style="left:1883px;top:677px;width:25px;height:26px"></i><svg style="left:1891px;top:688px;color:#ddd" width="9" height="6"><use href="#cd"/></svg>
<i style="left:1546px;top:707px;width:39px;height:201px;background:#1d1d1d"></i>
<i style="left:1550px;top:846px;width:35px;height:35px;background:#2f2f2f;border-radius:5px 0 0 5px"></i>
<svg style="left:1558px;top:721px" width="19" height="19"><circle cx="9.500" cy="9.500" r="8.500" fill="#8a4044"/><path d="M3 5L8 8 5 13ZM10 10L16 11 12 16ZM9 2L13 3 12 6Z" fill="#2a2a2a"/></svg>
<svg style="left:1558px;top:770px" width="19" height="19" fill="none" stroke="#d8d8d8" stroke-width="1.300"><rect x="1" y="1" width="17" height="5"/><path d="M2 6V18H17V6M7 10H12"/></svg>
<svg style="left:1558px;top:817px" width="19" height="19"><rect x="4" y="4" width="11" height="11" fill="#d18a3e"/><path d="M1 4V1H4M15 1H18V4M18 15V18H15M4 18H1V15" fill="none" stroke="#b9793a"/></svg>
<svg style="left:1556px;top:853px;color:#7b9de0" width="22" height="22"><use href="#wf"/></svg>
<svg style="left:1556px;top:889px" width="22" height="19" stroke="#5d8ae0" fill="#5d8ae0"><path d="M6 4L20 6M6 4L10 12M6 4L18 16" stroke-width="1.200"/><circle cx="5" cy="4" r="3.500"/><circle cx="9" cy="14" r="2.500"/></svg>

<svg style="left:1600px;top:722px;color:#e6e6e6" width="20" height="20"><use href="#ot"/></svg>
<b style="left:1632px;top:731px">MG_body...</b>
<svg style="left:1729px;top:726px;color:#ddd" width="7" height="12"><use href="#cr"/></svg>
<svg style="left:1749px;top:722px" width="20" height="20" fill="none" stroke="#ccc" stroke-width="1.100"><rect x="1" y="1" width="8" height="18" stroke="#888"/><rect x="11" y="1" width="8" height="18"/><path d="M12 19L18 1"/></svg>
<b style="left:1781px;top:731px">Triangulate</b>
<svg style="left:1886px;top:722px;color:#aaa" width="20" height="20"><use href="#pn"/></svg>
<i class="dd" style="left:1597px;top:768px;width:311px;height:25px"></i>
<b style="left:1607px;top:780px">Add Modifier</b>
<svg style="left:1895px;top:778px;color:#ddd" width="9" height="6"><use href="#cd"/></svg>
<i style="left:1913px;top:720px;width:4px;height:188px;background:#444;border-radius:2px"></i>

<!-- modifier rows -->
<i style="left:1595px;top:807px;width:313px;height:33px;background:#3c3c3c;border-radius:5px"></i>
<svg style="left:1610px;top:818px;color:#aaa" width="7" height="12"><use href="#cr"/></svg>
<svg style="left:1626px;top:814px" width="22" height="22" fill="none" stroke="#aaa" stroke-width="1.100"><rect x="1" y="10" width="11" height="11"/><path d="M12 1V13M20 4L13 10 20 15" stroke="#eee"/></svg>
<i style="left:1661px;top:812px;width:49px;height:25px;background:#1d1d1d;border-radius:4px 0 0 4px"></i><b style="left:1671px;top:824px">W...</b>
<i style="left:1710px;top:812px;width:26px;height:25px;background:#545454"></i><svg style="left:1714px;top:814px;color:#e0e0e0" width="19" height="21"><use href="#ms"/></svg>
<i style="left:1737px;top:812px;width:25px;height:25px;background:#4772b3"></i><svg style="left:1740px;top:814px;color:#e6eaf2" width="20" height="20"><use href="#edm"/></svg>
<i style="left:1763px;top:812px;width:25px;height:25px;background:#4772b3"></i><svg style="left:1766px;top:815px;color:#f0f0f0" width="20" height="20"><use href="#mon"/></svg>
<i style="left:1789px;top:812px;width:25px;height:25px;background:#4772b3"></i><svg style="left:1792px;top:815px;color:#f0f0f0" width="20" height="20"><use href="#cam"/></svg>
<i style="left:1814px;top:812px;width:26px;height:25px;background:#1d1d1d;border-radius:0 4px 4px 0"></i><svg style="left:1821px;top:822px;color:#ddd" width="12" height="7"><use href="#cd"/></svg>
<svg style="left:1847px;top:819px;color:#ddd" width="12" height="12"><use href="#xx"/></svg>
<svg style="left:1884px;top:821px;color:#aaa" width="15" height="7"><use href="#gp"/></svg>

<i style="left:1595px;top:842px;width:313px;height:33px;background:#3c3c3c;border-radius:5px"></i>
<svg style="left:1610px;top:853px;color:#aaa" width="7" height="12"><use href="#cr"/></svg>
<svg style="left:1626px;top:849px" width="22" height="22" fill="none" stroke="#aaa" stroke-width="1.200"><path d="M11 1V21" stroke-dasharray="2 2" stroke="#eee"/><path d="M8 3C3 1 2 7 5.500 10.500 1.500 13 3.500 21 8 19"/><path d="M14 3C19 1 20 7 16.500 10.500 20.500 13 18.500 21 14 19" stroke="#ddd"/></svg>
<i style="left:1661px;top:847px;width:49px;height:25px;background:#1d1d1d;border-radius:4px 0 0 4px"></i><b style="left:1671px;top:859px">Mi...</b>
<i style="left:1710px;top:847px;width:26px;height:25px;background:#545454"></i><svg style="left:1714px;top:849px;color:#e0e0e0" width="19" height="21"><use href="#ms"/></svg>
<i style="left:1737px;top:847px;width:25px;height:25px;background:#4772b3"></i><svg style="left:1740px;top:849px;color:#e6eaf2" width="20" height="20"><use href="#edm"/></svg>
<i style="left:1763px;top:847px;width:25px;height:25px;background:#4772b3"></i><svg style="left:1766px;top:850px;color:#f0f0f0" width="20" height="20"><use href="#mon"/></svg>
<i style="left:1789px;top:847px;width:25px;height:25px;background:#4772b3"></i><svg style="left:1792px;top:850px;color:#f0f0f0" width="20" height="20"><use href="#cam"/></svg>
<i style="left:1814px;top:847px;width:26px;height:25px;background:#1d1d1d;border-radius:0 4px 4px 0"></i><svg style="left:1821px;top:857px;color:#ddd" width="12" height="7"><use href="#cd"/></svg>
<svg style="left:1847px;top:854px;color:#ddd" width="12" height="12"><use href="#xx"/></svg>
<svg style="left:1884px;top:856px;color:#aaa" width="15" height="7"><use href="#gp"/></svg>

<i style="left:1595px;top:877px;width:311px;height:31px;background:#3c3c3c;border:1px solid #5f82ad;border-bottom:0;border-radius:5px 5px 0 0"></i>
<svg style="left:1610px;top:888px;color:#aaa" width="7" height="12"><use href="#cr"/></svg>
<svg style="left:1626px;top:885px" width="20" height="20" fill="none" stroke="#ccc" stroke-width="1.100"><rect x="1" y="1" width="8" height="18" stroke="#888"/><rect x="11" y="1" width="8" height="18" stroke="#eee"/><path d="M12 19L18 1" stroke="#eee"/></svg>
<i style="left:1661px;top:882px;width:49px;height:25px;background:#1d1d1d;border-radius:4px 0 0 4px"></i><b style="left:1671px;top:894px">Tr...</b>
<i style="left:1710px;top:882px;width:26px;height:25px;background:#4e4e4e"></i><svg style="left:1714px;top:884px;color:#9a9a9a" width="19" height="21"><use href="#ms"/></svg>
<i style="left:1737px;top:882px;width:25px;height:25px;background:#415a85"></i><svg style="left:1740px;top:884px;color:#9eb0d0" width="20" height="20"><use href="#edm"/></svg>
<i style="left:1763px;top:882px;width:25px;height:25px;background:#545454"></i><svg style="left:1766px;top:885px;color:#9a9a9a" width="20" height="20"><path d="M2 3H18V14H2ZM10 14V17M5 17.500H15" fill="none" stroke="currentColor" stroke-width="1.300"/></svg>
<i style="left:1789px;top:882px;width:25px;height:25px;background:#4772b3"></i><svg style="left:1792px;top:885px;color:#f0f0f0" width="20" height="20"><use href="#cam"/></svg>
<i style="left:1814px;top:882px;width:26px;height:25px;background:#1d1d1d;border-radius:0 4px 4px 0"></i><svg style="left:1821px;top:892px;color:#ddd" width="12" height="7"><use href="#cd"/></svg>
<svg style="left:1847px;top:889px;color:#ddd" width="12" height="12"><use href="#xx"/></svg>
<svg style="left:1884px;top:891px;color:#aaa" width="15" height="7"><use href="#gp"/></svg>

<!-- right header tools -->
<i style="left:1372px;top:8px;width:26px;height:26px;background:#2a2a2a;border-radius:4px"></i>
<svg style="left:1376px;top:12px" width="18" height="20" fill="none" stroke="#5a5a5a" stroke-width="1.400"><path d="M9 18V2M4 7L9 2 14 7M9 18H17"/></svg>
<i style="left:1404px;top:8px;width:27px;height:26px;background:#545454;border-radius:4px 0 0 4px"></i>
<i style="left:1431px;top:8px;width:43px;height:26px;background:#232323;border-radius:0 4px 4px 0;box-shadow:inset 0 0 0 1px #333"></i>
<svg style="left:1407px;top:12px" width="21" height="19" fill="none" stroke="#d6d6d6" stroke-width="1.500"><path d="M3 10C2 3 8 1 11 1c5 0 9 5 7 11l-5 6M7 10C6 6 9 5 11 5c3 0 5 3 4 6l-4 5"/></svg>
<svg style="left:1438px;top:13px" width="18" height="18" fill="none" stroke="#ddd" stroke-width="1.200"><rect x="1" y="1" width="6" height="6" fill="#ddd"/><path d="M11 1V17M1 12H17M4 9V17M17 5H7"/></svg>
<svg style="left:1461px;top:20px;color:#ddd" width="9" height="6"><use href="#cd"/></svg>
<i style="left:1481px;top:8px;width:26px;height:26px;background:#4772b3;border-radius:4px 0 0 4px"></i>
<i style="left:1507px;top:8px;width:27px;height:26px;background:#232323;border-radius:0 4px 4px 0;box-shadow:inset 0 0 0 1px #333"></i>
<svg style="left:1484px;top:11px" width="21" height="21"><circle cx="8" cy="13" r="6.500" fill="none" stroke="#f0f0f0" stroke-width="1.500"/><circle cx="13" cy="8" r="7" fill="#f0f0f0"/></svg>
<svg style="left:1515px;top:20px;color:#ddd" width="11" height="7"><use href="#cd"/></svg>
</div></body></html>
